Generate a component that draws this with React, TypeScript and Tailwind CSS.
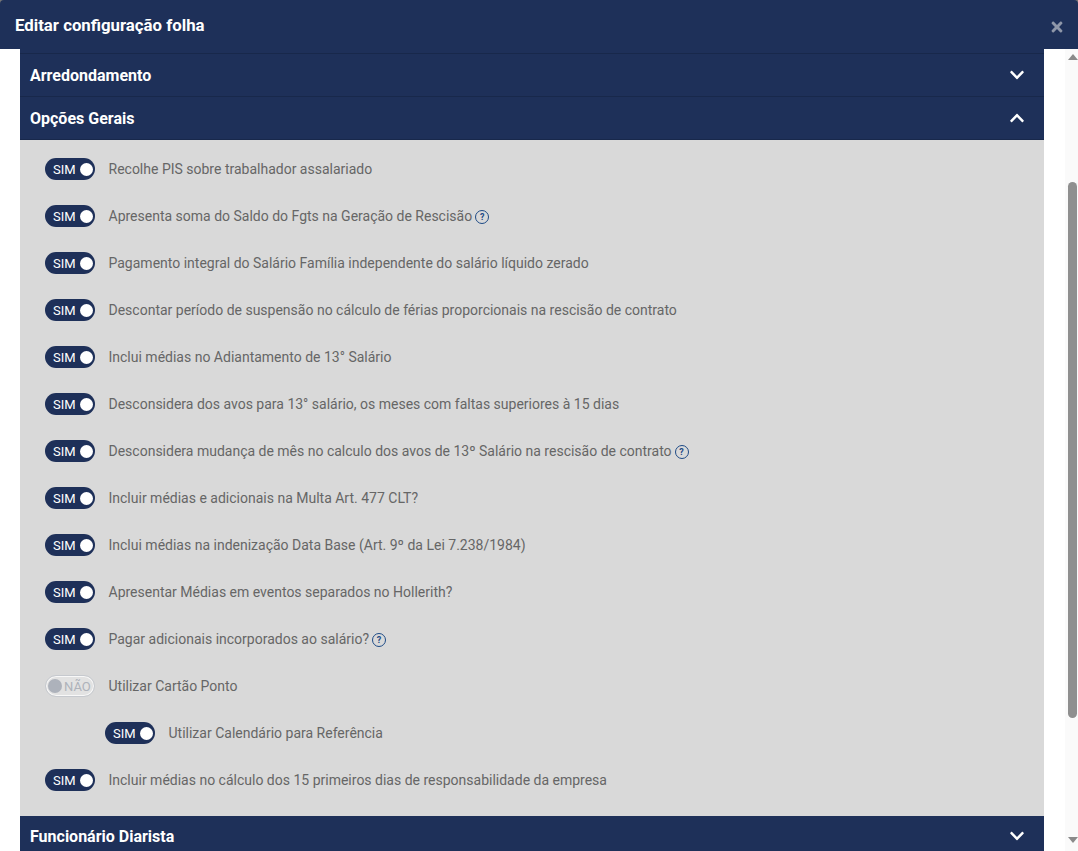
import { FaChevronDown, FaChevronUp, FaTimes } from 'react-icons/fa';

type Option = {
  label: string;
  help?: boolean;
  off?: boolean;
  nested?: boolean;
};

const options: Option[] = [
  { label: 'Recolhe PIS sobre trabalhador assalariado' },
  { label: 'Apresenta soma do Saldo do Fgts na Geração de Rescisão', help: true },
  { label: 'Pagamento integral do Salário Família independente do salário líquido zerado' },
  { label: 'Descontar período de suspensão no cálculo de férias proporcionais na rescisão de contrato' },
  { label: 'Inclui médias no Adiantamento de 13° Salário' },
  { label: 'Desconsidera dos avos para 13° salário, os meses com faltas superiores à 15 dias' },
  { label: 'Desconsidera mudança de mês no calculo dos avos de 13º Salário na rescisão de contrato', help: true },
  { label: 'Incluir médias e adicionais na Multa Art. 477 CLT?' },
  { label: 'Inclui médias na indenização Data Base (Art. 9º da Lei 7.238/1984)' },
  { label: 'Apresentar Médias em eventos separados no Hollerith?' },
  { label: 'Pagar adicionais incorporados ao salário?', help: true },
  { label: 'Utilizar Cartão Ponto', off: true },
  { label: 'Utilizar Calendário para Referência', nested: true },
  { label: 'Incluir médias no cálculo dos 15 primeiros dias de responsabilidade da empresa' },
];

function Toggle({ off }: { off?: boolean }) {
  if (off) {
    return (
      <div className="flex h-[22px] w-[50px] shrink-0 items-center rounded-full border border-[#c6c9ce] bg-[#e2e2e2] pl-[2px] text-[13px] text-[#aeb2ba] shadow-[inset_0_0_0_1px_#f8f8f8]">
        <span className="size-[14px] rounded-full bg-[#adb2bb]" />
        <span className="ml-[2px] pt-px">NÃO</span>
      </div>
    );
  }
  return (
    <div className="flex h-[22px] w-[50px] shrink-0 items-center justify-between rounded-full bg-[#1e3059] pl-[8px] pr-[2px] text-[13px] text-white">
      <span className="pt-px">SIM</span>
      <span className="size-[13px] rounded-full bg-white" />
    </div>
  );
}

function HelpIcon() {
  return (
    <span className="ml-[3px] mt-[2px] inline-flex size-[14px] shrink-0 items-center justify-center rounded-full border-[1.5px] border-[#1d4a86] text-[9px] font-bold leading-none text-[#1d4a86]">
      ?
    </span>
  );
}

function SectionHeader({ title, open, short }: { title: string; open?: boolean; short?: boolean }) {
  return (
    <div
      className={
        short
          ? 'flex h-[40px] items-center justify-between border-b border-[#18284b] bg-[#1e3059] pl-[10px] pr-[19px] text-[16px] font-bold text-white'
          : 'flex h-[43px] items-center justify-between border-b border-[#18284b] bg-[#1e3059] pl-[10px] pr-[19px] text-[16px] font-bold text-white'
      }
    >
      <span className="pt-[2px]">{title}</span>
      {open ? <FaChevronUp className="text-[16px]" /> : <FaChevronDown className="text-[16px]" />}
    </div>
  );
}

export default function App() {
  return (
    <div className="flex h-[851px] flex-col overflow-hidden bg-[#777777] font-['Roboto',sans-serif]">
      <div className="flex h-[49px] shrink-0 items-center justify-between rounded-t-[4px] bg-[#1e3059] pl-[15px] pr-[13px] text-[16.8px] font-bold text-white">
        <span className="pt-[2px]">Editar configuração folha</span>
        <FaTimes className="mt-[5px] text-[16px] text-[#8f97a9]" />
      </div>
      <div className="flex min-h-0 flex-1 bg-white">
        <div className="min-w-0 flex-1 pl-5 pr-[21px]">
          <div className="h-[5px] border-b border-[#18284b] bg-[#1e3059]" />
          <SectionHeader title="Arredondamento" />
          <SectionHeader title="Opções Gerais" open />
          <div className="flex h-[676px] flex-col gap-[25px] bg-[#d9d9d9] pl-[25px] pt-[18px] text-[14px] text-[#666666]">
            {options.map((option) => (
              <div
                key={option.label}
                className={option.nested ? 'flex h-[22px] items-center pl-[60px]' : 'flex h-[22px] items-center'}
              >
                <Toggle off={option.off} />
                <span className="ml-[13.5px]">{option.label}</span>
                {option.help && <HelpIcon />}
              </div>
            ))}
          </div>
          <SectionHeader title="Funcionário Diarista" short />
        </div>
        <div className="flex w-[13px] shrink-0 flex-col items-start bg-[#fafafa] pl-[3px]">
          <div className="mt-[5px] h-0 w-0 border-x-[5px] border-b-[6px] border-x-transparent border-b-[#8a8a8a]" />
          <div className="mt-[122px] h-[536px] w-[9px] rounded-full bg-[#8f8f8f]" />
          <div className="mt-[119px] h-0 w-0 border-x-[5px] border-t-[6px] border-x-transparent border-t-[#8a8a8a]" />
        </div>
      </div>
    </div>
  );
}
